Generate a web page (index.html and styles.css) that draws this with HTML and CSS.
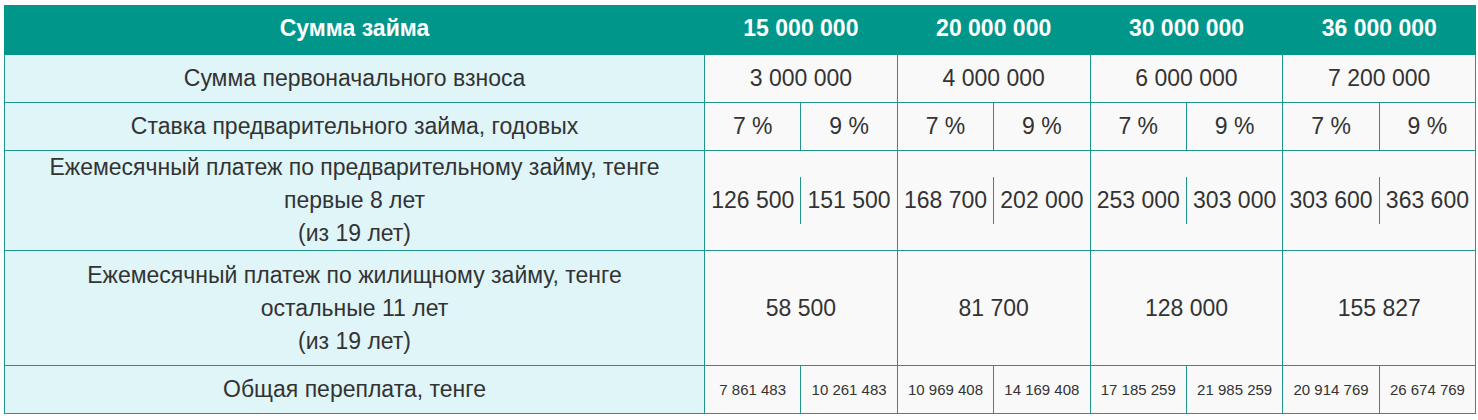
FILE: index.html
```html
<!DOCTYPE html>
<html lang="ru">
<head>
<meta charset="utf-8">
<link rel="stylesheet" href="styles.css">
</head>
<body>
<table class="loan">
  <colgroup>
    <col class="c-label">
    <col class="c-sub"><col class="c-sub"><col class="c-sub"><col class="c-sub">
    <col class="c-sub"><col class="c-sub"><col class="c-sub"><col class="c-sub">
  </colgroup>
  <thead>
    <tr class="r-head">
      <th>Сумма займа</th>
      <th colspan="2">15 000 000</th>
      <th colspan="2">20 000 000</th>
      <th colspan="2">30 000 000</th>
      <th colspan="2">36 000 000</th>
    </tr>
  </thead>
  <tbody>
    <tr class="r-std">
      <td class="label">Сумма первоначального взноса</td>
      <td colspan="2">3 000 000</td>
      <td colspan="2">4 000 000</td>
      <td colspan="2">6 000 000</td>
      <td colspan="2">7 200 000</td>
    </tr>
    <tr class="r-std">
      <td class="label">Ставка предварительного займа, годовых</td>
      <td>7 %</td><td>9 %</td>
      <td>7 %</td><td>9 %</td>
      <td>7 %</td><td>9 %</td>
      <td>7 %</td><td>9 %</td>
    </tr>
    <tr class="r-pre">
      <td class="label">Ежемесячный платеж по предварительному займу, тенге<br>первые 8 лет<br>(из 19 лет)</td>
      <td colspan="2" class="pair"><div class="split"><span>126 500</span><span class="right">151 500</span></div></td>
      <td colspan="2" class="pair"><div class="split"><span>168 700</span><span class="right">202 000</span></div></td>
      <td colspan="2" class="pair"><div class="split"><span>253 000</span><span class="right">303 000</span></div></td>
      <td colspan="2" class="pair"><div class="split"><span>303 600</span><span class="right">363 600</span></div></td>
    </tr>
    <tr class="r-house">
      <td class="label">Ежемесячный платеж по жилищному займу, тенге<br>остальные 11 лет<br>(из 19 лет)</td>
      <td colspan="2">58 500</td>
      <td colspan="2">81 700</td>
      <td colspan="2">128 000</td>
      <td colspan="2">155 827</td>
    </tr>
    <tr class="r-std">
      <td class="label">Общая переплата, тенге</td>
      <td class="small">7 861 483</td><td class="small">10 261 483</td>
      <td class="small">10 969 408</td><td class="small">14 169 408</td>
      <td class="small">17 185 259</td><td class="small">21 985 259</td>
      <td class="small">20 914 769</td><td class="small">26 674 769</td>
    </tr>
  </tbody>
</table>
</body>
</html>
```

FILE: styles.css
```css
html, body {
  margin: 0;
  padding: 0;
  background: #ffffff;
}

body {
  padding: 5px 4px 0 4px;
  font-family: "Liberation Sans", Arial, sans-serif;
  color: #333333;
}

.loan {
  border-collapse: collapse;
  table-layout: fixed;
  width: 1471px;
}

.c-label { width: 700px; }
.c-sub { width: 96.4px; }

.loan th,
.loan td {
  border: 1px solid #1f958b;
  text-align: center;
  vertical-align: middle;
  padding: 0;
  font-size: 23px;
  line-height: 33px;
  background: #f9f9f9;
}

.loan th {
  background: #00978a;
  color: #ffffff;
  font-weight: bold;
  font-size: 23px;
  border-color: #00978a;
  padding-bottom: 3px;
}

.loan td.label {
  background: #dff5f8;
}

.r-head { height: 49px; }
.r-std { height: 48px; }
.r-pre { height: 99px; }
.r-house { height: 115px; }

.loan td.small {
  font-size: 15px;
}

.split {
  display: flex;
  align-items: center;
}

.split span {
  flex: 1;
  display: block;
  line-height: 47px;
  white-space: nowrap;
}

.split .right {
  border-left: 1px solid #1f958b;
}
```
